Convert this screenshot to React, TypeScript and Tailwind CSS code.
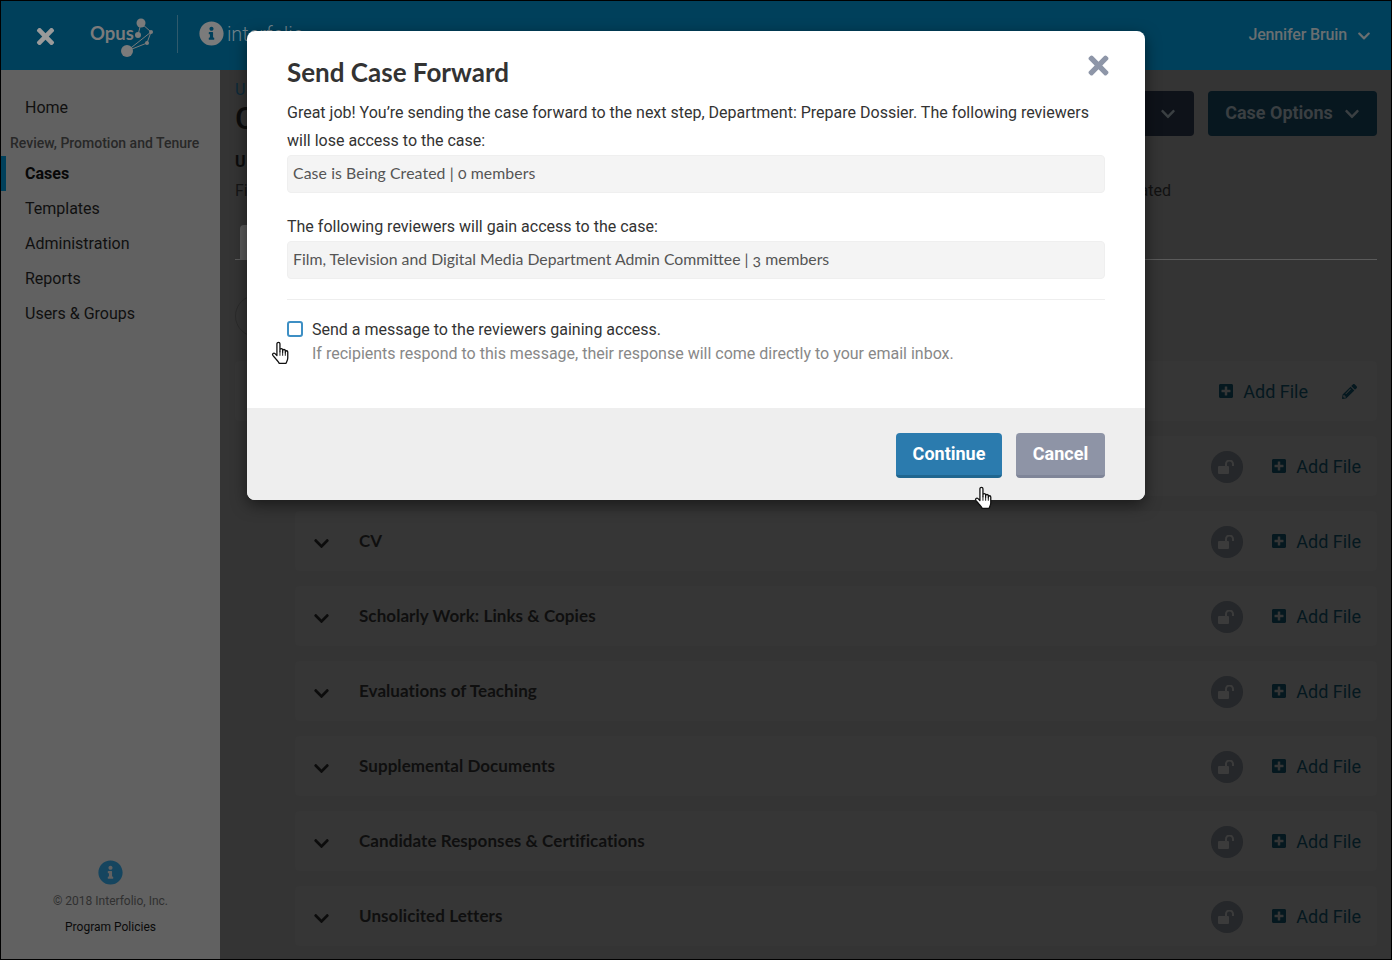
import { FaChevronDown, FaInfoCircle, FaPencilAlt, FaPlusSquare, FaTimes } from 'react-icons/fa'

/* ─── Data ────────────────────────────────────────────── */
const navItems = [
  { label: 'Cases', active: true },
  { label: 'Templates' },
  { label: 'Administration' },
  { label: 'Reports' },
  { label: 'Users & Groups' },
]

const sections = [
  'Personal Statement',
  'Hidden Section',
  'CV',
  'Scholarly Work: Links & Copies',
  'Evaluations of Teaching',
  'Supplemental Documents',
  'Candidate Responses & Certifications',
  'Unsolicited Letters',
]

const raleway = "font-['Lato','Noto_Sans',sans-serif]"

/* ─── Icons ───────────────────────────────────────────── */
function OpusMark() {
  return (
    <svg width="36" height="44" viewBox="0 0 36 44" className="ml-[-16px] flex-shrink-0">
      <g stroke="#7b7b7b" strokeWidth="1" fill="none">
        <path d="M23 9l10 9-4 11-20 8M33 18L9 37M23 9l-3 12" />
      </g>
      <g fill="#7b7b7b">
        <circle cx="23" cy="9" r="4.500" />
        <circle cx="20" cy="21" r="3" />
        <circle cx="33" cy="18" r="2" />
        <circle cx="29" cy="29" r="2" />
        <circle cx="9" cy="37" r="6" />
      </g>
    </svg>
  )
}

function LockOpen() {
  return (
    <svg width="18" height="14" viewBox="0 0 18 14">
      <rect x="0" y="6" width="11" height="8" rx="1" fill="#3b3b3b" />
      <path d="M8 6.500V4a3.500 3.500 0 0 1 7 0v2" stroke="#3b3b3b" strokeWidth="2" fill="none" />
    </svg>
  )
}

function HandCursor({ className }: { className: string }) {
  return (
    <svg width="24" height="28" viewBox="0 0 20 24" className={className}>
      <path
        d="M6.500 3.200c0-1.600 2.600-1.600 2.600 0V10V8.400c0-1.400 2.300-1.400 2.300 0V10.500V9.200c0-1.400 2.300-1.400 2.300 0v1.800v-.8c0-1.300 2.100-1.300 2.100 0v5.300c0 2-1 3-1.500 4.500H8.500c-.8-1.500-2-2.600-3.600-4.600L3 13.200c-.9-1.300.8-2.600 1.900-1.500l1.600 1.600Z"
        fill="#fff"
        stroke="#111"
        strokeWidth="1.100"
        strokeLinejoin="round"
      />
      <path d="M9.100 10v3.500M11.400 10.500v3M13.700 11v2.500" stroke="#111" strokeWidth="0.800" />
    </svg>
  )
}

/* ─── Page parts ──────────────────────────────────────── */
function TopBar() {
  return (
    <header className="flex h-[69px] flex-shrink-0 items-center bg-[#00405b] pl-[32px] pr-[20px]">
      <FaTimes className="mt-[2px] text-[25px] text-[#9a9a9a]" />
      <span className={`mb-[4px] ml-[32px] text-[18.500px] font-bold text-[#7b7b7b] ${raleway}`}>Opus</span>
      <OpusMark />
      <div className="mb-[4px] ml-[23px] h-[38px] w-px bg-[#2f5a6c]" />
      <FaInfoCircle className="mb-[4px] ml-[21px] text-[25px] text-[#7b7b7b]" />
      <span className="mb-[4px] ml-[3px] text-[20px] font-light text-[#71838b]">interfolio</span>
      <span className="mb-[2px] ml-auto text-[16px] font-medium tracking-[-0.15px] text-[#6a6f71]">Jennifer Bruin</span>
      <FaChevronDown className="ml-[10px] text-[14px] text-[#6a6f71]" />
    </header>
  )
}

function Sidebar() {
  return (
    <aside className="flex w-[219px] flex-shrink-0 flex-col bg-[#616161] pt-[26px]">
      <a className="pl-[24px] text-[16px] leading-[24px] text-[#101010]">Home</a>
      <p className="mt-[13px] pl-[9px] text-[14px] font-medium leading-[20px] text-[#282828]">
        Review, Promotion and Tenure
      </p>
      <nav className="mt-[3px]">
        {navItems.map((item) => (
          <a
            key={item.label}
            className={`block h-[35px] border-l-[5px] pl-[19px] text-[16px] leading-[35px] ${
              item.active ? 'border-[#00405b] font-bold text-[#080808]' : 'border-transparent text-[#101010]'
            }`}
          >
            {item.label}
          </a>
        ))}
      </nav>
      <div className="mt-auto flex flex-col items-center pb-[23px] text-[12px]">
        <FaInfoCircle className="text-[25px] text-[#15455f]" />
        <span className="mt-[7px] leading-[18px] text-[#303030]">© 2018 Interfolio, Inc.</span>
        <a className="mt-[8px] leading-[18px] text-[#0a0a0a]">Program Policies</a>
      </div>
    </aside>
  )
}

function AddFile() {
  return (
    <span className="flex items-center text-[#05181f]">
      <FaPlusSquare className="text-[16px]" />
      <span className="ml-[9px] text-[18px]">Add File</span>
    </span>
  )
}

function SectionRow({ title, first }: { title: string; first: boolean }) {
  if (first) {
    return (
      <div className="flex h-[60px] items-center justify-end rounded bg-[#363636] pr-[20px]">
        <AddFile />
        <FaPencilAlt className="ml-[34px] text-[15px] text-[#05181f]" />
      </div>
    )
  }
  return (
    <div className="ml-[60px] flex h-[60px] items-center rounded bg-[#363636] pl-[18px] pr-[16px]">
      <FaChevronDown className="mt-[5px] text-[17px] text-[#0c0c0c]" />
      <span className={`ml-[29px] text-[17px] font-bold tracking-[0.07px] text-[#0f0f0f] ${raleway}`}>{title}</span>
      <div className="ml-auto mr-[28px] mt-[2px] flex h-[32px] w-[32px] items-center justify-center rounded-full bg-[#25272a]">
        <LockOpen />
      </div>
      <AddFile />
    </div>
  )
}

function MainContent() {
  return (
    <main className="flex-1 overflow-hidden bg-[#343434] pl-[15px] pr-[14px]">
      <div className="flex h-[190px] justify-between border-b border-[#5a5a5a]">
        <div className="pt-[10px]">
          <p className="text-[16px] leading-[20px] text-[#0d2a3a]">U</p>
          <h1 className="text-[32px] font-medium leading-[36px] text-[#0c0c0c]">C</h1>
          <p className="mt-[14px] text-[16px] font-bold leading-[24px] text-[#0c0c0c]">U</p>
          <p className="mt-[5px] text-[16px] leading-[24px] text-[#161616]">Fi</p>
          <div className="ml-[5px] mt-[22px] h-[35px] w-[30px] rounded-t bg-[#5a5a5a]" />
        </div>
        <div className="relative flex gap-[14px] pt-[21px]">
          <button className="flex h-[45px] w-[150px] items-center justify-end rounded bg-[#0e1219] pr-[18px] text-[18px] font-bold text-[#3a3f42]">
            <FaChevronDown className="text-[16px]" />
          </button>
          <button className="flex h-[45px] w-[169px] items-center justify-center rounded bg-[#07171f] pb-[3px] text-[18px] font-bold text-[#3a3f42]">
            Case Options
            <FaChevronDown className="ml-[11px] mt-[3px] text-[16px]" />
          </button>
          <span className="absolute right-[206px] top-[109px] text-[16px] leading-[24px] text-[#111]">ated</span>
        </div>
      </div>
      <div className="mt-[35px] h-[42px] w-[42px] rounded-full border border-[#2b2b2b]" />
      <div className="mt-[24px] flex flex-col gap-[15px]">
        {sections.map((title, i) => (
          <SectionRow key={title} title={title} first={i === 0} />
        ))}
      </div>
    </main>
  )
}

function SendCaseModal() {
  return (
    <div className="absolute left-[246px] top-[30px] w-[898px] overflow-hidden rounded-lg bg-white shadow-[0_5px_15px_rgba(0,0,0,0.5)]">
      <div className="relative h-[377px] px-[40px] pt-[25px] text-[16px] text-[#333]">
        <FaTimes className="absolute right-[32px] top-[20px] text-[29px] text-[#8e96a8]" />
        <h2 className={`text-[26px] font-bold leading-[32px] text-[#333] ${raleway}`}>Send Case Forward</h2>
        <p className="mt-[11px] leading-[28px]">
          Great job! You’re sending the case forward to the next step, Department: Prepare Dossier. The following
          reviewers will lose access to the case:
        </p>
        <div className={`flex h-[38px] items-center rounded border border-[#efefef] bg-[#f4f4f4] px-[5px] pb-[2px] text-[15.800px] tracking-[0.1px] oldstyle-nums text-[#555] ${raleway}`}>
          Case is Being Created | 0 members
        </div>
        <p className="mt-[20px] leading-[28px]">The following reviewers will gain access to the case:</p>
        <div className={`flex h-[38px] items-center rounded border border-[#efefef] bg-[#f4f4f4] px-[5px] pb-[2px] text-[15.800px] oldstyle-nums text-[#555] ${raleway}`}>
          Film, Television and Digital Media Department Admin Committee | 3 members
        </div>
        <div className="mt-[20px] border-t border-[#eee]" />
        <div className="mt-[18px] flex">
          <span className="mt-[3px] h-[16px] w-[16px] flex-shrink-0 rounded-[3px] border-2 border-[#3d8fc4]" />
          <div className="ml-[9px] leading-[24px]">
            <p>Send a message to the reviewers gaining access.</p>
            <p className="text-[#888]">If recipients respond to this message, their response will come directly to your email inbox.</p>
          </div>
        </div>
      </div>
      <div className="flex h-[92px] items-start justify-end gap-[14px] bg-[#eee] px-[40px] pt-[25px] text-[18px] font-bold text-white">
        <button className="h-[45px] w-[106px] rounded border-b-[3px] border-[#20668f] bg-[#2b7bae] pb-[2px]">Continue</button>
        <button className="h-[45px] w-[89px] rounded border-b-[3px] border-[#7f8598] bg-[#8e94a6] pb-[2px]">Cancel</button>
      </div>
    </div>
  )
}

/* ─── Komponen ────────────────────────────────────────── */
export default function App() {
  return (
    <div className="relative flex h-[960px] w-[1392px] flex-col overflow-hidden border border-black font-['Roboto',sans-serif]">
      <TopBar />
      <div className="flex min-h-0 flex-1">
        <Sidebar />
        <MainContent />
      </div>
      <SendCaseModal />
      <HandCursor className="absolute left-[268px] top-[339px]" />
      <HandCursor className="absolute left-[971px] top-[484px]" />
    </div>
  )
}
